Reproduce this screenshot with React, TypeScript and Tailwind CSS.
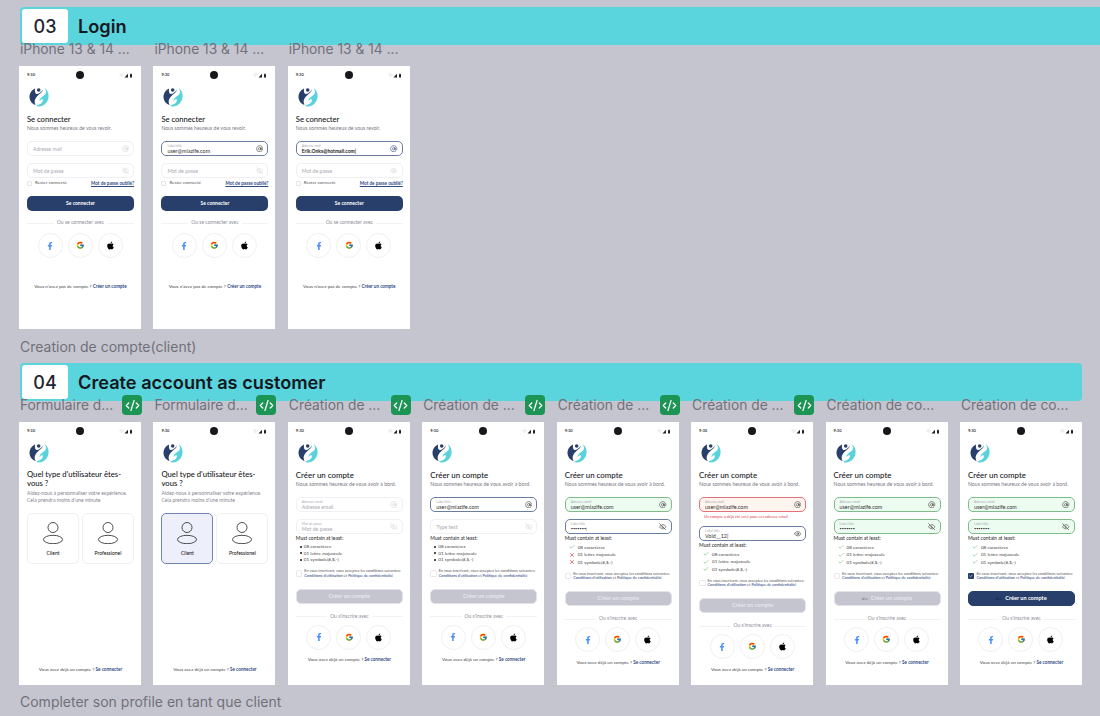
import { AtSign, Check, CodeXml, Eye, EyeOff, MoveLeft, X } from "lucide-react";
import { FaApple, FaFacebookF } from "react-icons/fa";
import { FcGoogle } from "react-icons/fc";

type FieldState = "empty" | "focused" | "success" | "error";

type Field = {
  state: FieldState;
  label?: string;
  value?: string;
  placeholder?: string;
  bold?: boolean;
  dots?: boolean;
  icon: "at" | "eye" | "eyeOff";
};

const fieldStyles: Record<FieldState, string> = {
  empty: "border-[#f0f0f4] bg-white",
  focused: "border-[#6b7da0] bg-white",
  success: "border-[#7fbc89] bg-[#edfcf0]",
  error: "border-[#e2727a] bg-[#fff5ee]",
};

function Logo() {
  return (
    <svg viewBox="0 0 20 20" className="h-[20px] w-[20px]">
      <path
        d="M6 1.500C2.500 3 .5 6.500.5 10c0 3.500 2.500 7 6 8-1.500-3-1-5.500 1-8 2.500-3 6-4.500 6.500-7.500-1.500 2.500-4 4-5.500 4.500-2 .5-3-2-2.500-5.500Z"
        fill="#283f6b"
      />
      <circle cx="9.700" cy="3" r="1.800" fill="#283f6b" />
      <path
        d="M15.500 1c3.500 2.500 4.500 6 4 9.500-.5 4.500-4.500 9-9.500 9-1.500 0-2.500-.5-3-1 3-.5 7-2.500 7-5.500 0-1.500-2-1-3.500 1-.5-3 4.500-5 6-7 1-2 .5-4-1-6Z"
        fill="#5ad2dc"
      />
    </svg>
  );
}

function StatusBar() {
  return (
    <div className="relative flex h-[18px] items-center justify-between pl-[8px] pr-[8px]">
      <span className="text-[4px] font-semibold text-[#222]">9:30</span>
      <span className="absolute left-[57px] top-[5px] h-[8px] w-[8px] rounded-full bg-[#17171c]" />
      <svg viewBox="0 0 14 5" className="h-[5px] w-[14px]">
        <path d="M0 1.200C1.500-.2 3.500-.2 5 1.200L2.500 4.500Z" fill="#eeeef0" />
        <path d="M5.500 4.500 9 .8v3.700Z" fill="#222" />
        <path d="M11 1.200h.6V.5h.8v.7h.6v3.300h-2Z" fill="#222" />
      </svg>
    </div>
  );
}

function FieldIcon({ field }: { field: Field }) {
  const color =
    field.state === "empty" ? "text-[#d2d2d8]" : field.bold ? "text-[#283f6b]" : "text-[#333]";
  const Icon = field.icon === "at" ? AtSign : field.icon === "eye" ? Eye : EyeOff;
  return <Icon className={`h-[7.500px] w-[7.500px] shrink-0 ${color}`} strokeWidth={1.800} />;
}

function Input({ field }: { field: Field }) {
  return (
    <div
      className={`flex h-[15px] items-center justify-between rounded-[5px] border-[0.75px] pl-[5px] pr-[4px] ${fieldStyles[field.state]}`}
    >
      <div className="flex min-w-0 flex-col">
        {field.label && (
          <span className="h-[4px] whitespace-nowrap text-[3.400px] leading-[4px] text-[#a8a8b2]">
            {field.label}
          </span>
        )}
        {field.value && (
          <span
            className={`h-[6px] whitespace-nowrap leading-[6px] ${field.dots ? "text-[3.800px]" : "text-[5.400px]"} ${field.bold ? "text-[5px] font-bold text-[#222]" : "text-[#333]"}`}
          >
            {field.value}
          </span>
        )}
        {field.placeholder && (
          <span className="h-[6px] whitespace-nowrap text-[5.200px] leading-[6px] text-[#a8a8b2]">
            {field.placeholder}
          </span>
        )}
      </div>
      <FieldIcon field={field} />
    </div>
  );
}

function Socials({ className }: { className: string }) {
  return (
    <div className={`flex justify-center gap-[5px] pr-[1px] ${className}`}>
      <span className="flex h-[25px] w-[25px] items-center justify-center rounded-full border-[0.5px] border-[#f0f0f3]">
        <FaFacebookF className="h-[8px] w-[8px] text-[#4a90f7]" />
      </span>
      <span className="flex h-[25px] w-[25px] items-center justify-center rounded-full border-[0.5px] border-[#f0f0f3]">
        <FcGoogle className="h-[8.500px] w-[8.500px]" />
      </span>
      <span className="flex h-[25px] w-[25px] items-center justify-center rounded-full border-[0.5px] border-[#f0f0f3]">
        <FaApple className="h-[9px] w-[9px] text-black" />
      </span>
    </div>
  );
}

function Divider({ text, className }: { text: string; className: string }) {
  return (
    <div className={`flex h-[8px] items-center gap-[3px] ${className}`}>
      <span className="h-[1px] flex-1 bg-[#f2f2f5]" />
      <span className="text-[5px] text-[#8d8d98]">{text}</span>
      <span className="h-[1px] flex-1 bg-[#f2f2f5]" />
    </div>
  );
}

function Footer({ text, link, className }: { text: string; link: string; className: string }) {
  return (
    <p className={`h-[8px] whitespace-nowrap text-center text-[4.600px] leading-[8px] text-[#444] ${className}`}>
      {text} <span className="font-bold text-[#2f4a85]">{link}</span>
    </p>
  );
}

function Phone({ children }: { children: React.ReactNode }) {
  return (
    <div className="h-[263px] w-[122px] bg-white font-['Lato',sans-serif]">
      <StatusBar />
      <div className="flex flex-col pl-[8px] pr-[7px]">{children}</div>
    </div>
  );
}

function LoginScreen({ email, password }: { email: Field; password: Field }) {
  return (
    <Phone>
      <div className="mt-[3px] ml-[2px]">
        <Logo />
      </div>
      <h2 className="mt-[7px] h-[10px] text-[7.600px] font-medium leading-[10px] text-[#17171c]">
        Se connecter
      </h2>
      <p className="h-[8px] whitespace-nowrap text-[5.100px] leading-[8px] text-[#77777f]">
        Nous sommes heureux de vous revoir.
      </p>
      <div className="mt-[9px]">
        <Input field={email} />
      </div>
      <div className="mt-[7px]">
        <Input field={password} />
      </div>
      <div className="mt-[1px] flex h-[8px] items-center justify-between">
        <span className="flex items-center gap-[3px] text-[4.500px] text-[#555]">
          <span className="h-[5px] w-[5px] rounded-[1px] border-[0.5px] border-[#e6e6ea]" />
          Rester connecté
        </span>
        <span className="text-[4.600px] font-bold text-[#2f4a85] underline">Mot de passe oublié?</span>
      </div>
      <button className="mt-[9px] h-[15px] rounded-[5px] bg-[#283f6b] text-[5px] font-bold text-white">
        Se connecter
      </button>
      <Divider text="Ou se connecter avec" className="mt-[8px]" />
      <Socials className="mt-[6px]" />
      <Footer text="Vous n'avez pas de compte ?" link="Créer un compte" className="mt-[24px]" />
    </Phone>
  );
}

function PersonCard({ label, selected }: { label: string; selected?: boolean }) {
  return (
    <div
      className={`flex h-[51px] w-[52px] flex-col items-center rounded-[5px] border-[0.75px] pt-[8px] ${selected ? "border-[#6f86b5] bg-[#edf0fa]" : "border-[#f0f0f4] bg-white"}`}
    >
      <svg viewBox="0 0 22 22" className="h-[22px] w-[22px]" fill="none" stroke="#222" strokeWidth="0.800">
        <circle cx="11" cy="5.500" r="5" />
        <ellipse cx="11" cy="17.500" rx="9.500" ry="4.200" />
      </svg>
      <span className="mt-[6px] text-[5px] font-medium text-[#222]">{label}</span>
    </div>
  );
}

function TypeScreen({ selected }: { selected?: boolean }) {
  return (
    <Phone>
      <div className="mt-[3px] ml-[2px]">
        <Logo />
      </div>
      <h2 className="mt-[7px] whitespace-nowrap text-[7.700px] font-medium leading-[9px] text-[#17171c]">
        Quel type d'utilisateur êtes-
        <br />
        vous ?
      </h2>
      <p className="mt-[1.500px] whitespace-nowrap text-[5.100px] leading-[7px] text-[#85858f]">
        Aidez-nous à personnaliser votre expérience.
        <br />
        Cela prendra moins d'une minute
      </p>
      <div className="mt-[9.500px] flex gap-[3px]">
        <PersonCard label="Client" selected={selected} />
        <PersonCard label="Professionel" />
      </div>
      <Footer text="Vous avez déjà un compte ?" link="Se connecter" className="mt-[101px]" />
    </Phone>
  );
}

const rules = ["08 caractères", "01 lettre majuscule", "01 symbole(#,$,-)"];

function CreateScreen({
  email,
  password,
  marks,
  error,
  checked,
  active,
  arrow,
}: {
  email: Field;
  password: Field;
  marks?: boolean[];
  error?: boolean;
  checked?: boolean;
  active?: boolean;
  arrow?: boolean;
}) {
  return (
    <Phone>
      <div className="mt-[3px] ml-[2px]">
        <Logo />
      </div>
      <h2 className="mt-[7px] h-[10px] whitespace-nowrap text-[7.900px] font-medium leading-[10px] text-[#17171c]">
        Créer un compte
      </h2>
      <p className="h-[8px] whitespace-nowrap text-[5.200px] leading-[8px] text-[#77777f]">
        Nous sommes heureux de vous avoir à bord.
      </p>
      <div className="mt-[9px]">
        <Input field={email} />
      </div>
      {error && (
        <p className="h-[7px] whitespace-nowrap pl-[5px] text-[3.900px] leading-[9px] text-[#e0404a]">
          Un compte a déjà été créé pour cet adresse email
        </p>
      )}
      <div className="mt-[7px]">
        <Input field={password} />
      </div>
      <p className="mt-[0.500px] h-[7px] whitespace-nowrap text-[5px] font-medium leading-[7px] text-[#333]">
        Must contain at least:
      </p>
      <ul className="mt-[2px] pl-[4px]">
        {rules.map((rule, i) => (
          <li
            key={rule}
            className={`flex items-center whitespace-nowrap text-[4.600px] text-[#444] ${marks ? "h-[7.500px] gap-[3px]" : "h-[6.500px] gap-[2px]"}`}
          >
            {marks ? (
              marks[i] ? (
                <Check className="h-[6px] w-[6px] text-[#49a85a]" strokeWidth={2} />
              ) : (
                <X className="h-[6px] w-[6px] text-[#d9343c]" strokeWidth={2.500} />
              )
            ) : (
              <span className="h-[2px] w-[2px] rounded-full bg-[#17171c]" />
            )}
            {rule}
          </li>
        ))}
      </ul>
      <div className={`flex h-[8px] items-center gap-[2px] ${marks ? "mt-[6px]" : "mt-[6.500px]"}`}>
        {checked ? (
          <span className="flex h-[6.500px] w-[6.500px] shrink-0 items-center justify-center rounded-[1px] bg-[#283f6b]">
            <Check className="h-[4px] w-[4px] text-white" strokeWidth={3} />
          </span>
        ) : (
          <span className="h-[6.500px] w-[6.500px] shrink-0 rounded-[1.500px] border-[0.5px] border-[#e6e6ea]" />
        )}
        <div className="text-[3.800px] leading-[4.500px] text-[#555]">
          <p className="whitespace-nowrap">En vous inscrivant, vous acceptez les conditions suivantes:</p>
          <p className="whitespace-nowrap font-medium text-[#2f4a85]">
            Conditions d'utilisation <span className="font-normal text-[#555]">et</span> Politique de
            confidentialité
          </p>
        </div>
      </div>
      <button
        className={`mt-[11px] flex h-[15px] shrink-0 items-center justify-center gap-[3px] rounded-[5px] border-[0.5px] text-[5.600px] font-bold ${active ? "border-[#283f6b] bg-[#283f6b] text-white" : "border-[#e2e2e8] bg-[#c5c5d0] text-[#e6e6ec]"}`}
      >
        {arrow && (
          <MoveLeft
            className={`h-[6px] w-[6px] ${active ? "text-[#17233d]" : "text-[#777782]"}`}
            strokeWidth={2.500}
          />
        )}
        Créer un compte
      </button>
      <Divider text="Ou s'inscrire avec" className="mt-[9px]" />
      <Socials className="mt-[4px]" />
      <Footer text="Vous avez déjà un compte ?" link="Se connecter" className="mt-[5.500px]" />
    </Phone>
  );
}

function Banner({ num, title, className }: { num: string; title: string; className: string }) {
  return (
    <div
      className={`relative flex h-[38px] items-center rounded-[4px] bg-[#5ad5dd] pl-[2px] font-['Inter',sans-serif] ${className}`}
    >
      <span className="flex h-[34px] w-[46px] items-center justify-center rounded-[3px] bg-white text-[18px] font-medium text-[#1f2430]">
        {num}
      </span>
      <span className="ml-[10px] pt-[1px] text-[18.200px] font-semibold text-[#15181f]">{title}</span>
    </div>
  );
}

function Column({ label, code, children }: { label: string; code?: boolean; children: React.ReactNode }) {
  return (
    <div className="flex w-[122px] flex-col">
      <div className="relative h-[21px] pl-[1px]">
        <span className="block h-[16px] whitespace-nowrap text-[13.800px] leading-[16px] text-[#717179]">
          {label}
        </span>
        {code && (
          <span className="absolute -right-[1px] top-[-2px] flex h-[20px] w-[20px] items-center justify-center rounded-[4px] bg-[#1b9454]">
            <CodeXml className="h-[15px] w-[15px] text-white" strokeWidth={2} />
          </span>
        )}
      </div>
      <div className="mt-[4px]">{children}</div>
    </div>
  );
}

const emptyMail: Field = { state: "empty", placeholder: "Adresse mail", icon: "at" };
const emptyPass: Field = { state: "empty", placeholder: "Mot de passe", icon: "eyeOff" };
const focusMail: Field = { state: "focused", label: "Label title", value: "user@mlazife.com", icon: "at" };
const okMail: Field = { state: "success", label: "Adresse email", value: "user@mlazife.com", icon: "at" };
const okPass: Field = { state: "success", label: "Label title", value: "•••••••", dots: true, icon: "eyeOff" };

export default function App() {
  return (
    <div className="h-[716px] w-[1100px] overflow-hidden bg-[#c5c5d0] pt-[7px] font-['Inter',sans-serif]">
      <Banner num="03" title="Login" className="ml-[20px] w-[1080px] rounded-r-none" />
      <div className="-mt-[4px] ml-[19px] flex gap-[12.400px]">
        <Column label="iPhone 13 & 14 ...">
          <LoginScreen email={emptyMail} password={emptyPass} />
        </Column>
        <Column label="iPhone 13 & 14 ...">
          <LoginScreen email={focusMail} password={emptyPass} />
        </Column>
        <Column label="iPhone 13 & 14 ...">
          <LoginScreen
            email={{ state: "focused", label: "Adresse mail", value: "Erik.Onks@hotmail.com|", bold: true, icon: "at" }}
            password={{ ...emptyPass, icon: "eye" }}
          />
        </Column>
      </div>
      <p className="ml-[20px] mt-[9px] h-[17px] text-[14px] leading-[17px] text-[#717179]">
        Creation de compte(client)
      </p>
      <Banner num="04" title="Create account as customer" className="ml-[20px] mt-[8px] w-[1062px]" />
      <div className="-mt-[4px] ml-[19px] flex gap-[12.430px]">
        <Column label="Formulaire d..." code>
          <TypeScreen />
        </Column>
        <Column label="Formulaire d..." code>
          <TypeScreen selected />
        </Column>
        <Column label="Création de ..." code>
          <CreateScreen
            email={{ state: "empty", label: "Adresse email", placeholder: "Adresse email", icon: "at" }}
            password={{ state: "empty", label: "Mot de passe", placeholder: "Mot de passe", icon: "eyeOff" }}
          />
        </Column>
        <Column label="Création de ..." code>
          <CreateScreen
            email={focusMail}
            password={{ state: "empty", placeholder: "Type text", icon: "eyeOff" }}
          />
        </Column>
        <Column label="Création de ..." code>
          <CreateScreen
            email={okMail}
            password={{ state: "focused", label: "Label title", value: "•••••••|", dots: true, icon: "eyeOff" }}
            marks={[true, false, false]}
          />
        </Column>
        <Column label="Création de ..." code>
          <CreateScreen
            email={{ state: "error", label: "Adresse mail", value: "user@mlazife.com", icon: "at" }}
            password={{ state: "focused", label: "Label title", value: "Void__12|", icon: "eye" }}
            marks={[true, true, true]}
            error
          />
        </Column>
        <Column label="Création de co...">
          <CreateScreen email={okMail} password={okPass} marks={[true, true, true]} arrow />
        </Column>
        <Column label="Création de co...">
          <CreateScreen email={okMail} password={okPass} marks={[true, true, true]} checked active arrow />
        </Column>
      </div>
      <p className="ml-[20px] mt-[8px] h-[17px] text-[14px] leading-[17px] text-[#717179]">
        Completer son profile en tant que client
      </p>
    </div>
  );
}
